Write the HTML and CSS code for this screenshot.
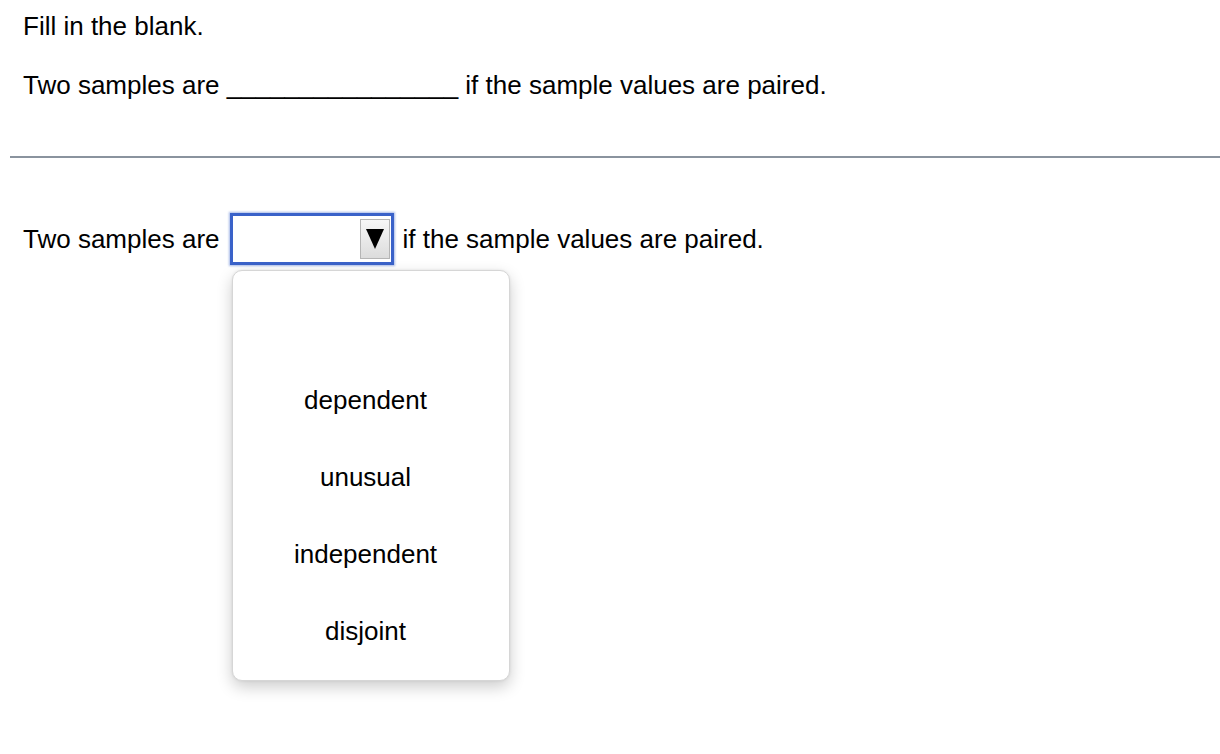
FILE: index.html
```html
<!DOCTYPE html>
<html>
<head>
<meta charset="utf-8">
<link rel="stylesheet" href="styles.css">
</head>
<body>
<div class="page">
  <div class="question">
    <p class="line first">Fill in the blank.</p>
    <p class="line second">Two samples are <span class="blank">________________</span> if the sample values are paired.</p>
  </div>
  <hr class="divider">
  <div class="answer-row">
    <span class="label">Two samples are</span>
    <div class="picker">
      <div class="picker-box">
        <span class="arrow-btn"><svg width="18" height="22" viewBox="0 0 18 22"><polygon points="0,1 18,1 9,21" fill="#000"/></svg></span>
      </div>
      <div class="choices">
        <div class="choice">&nbsp;</div>
        <div class="choice">dependent</div>
        <div class="choice">unusual</div>
        <div class="choice">independent</div>
        <div class="choice">disjoint</div>
      </div>
    </div>
    <span class="label tail">if the sample values are paired.</span>
  </div>
</div>
</body>
</html>
```
FILE: styles.css
```css
html, body {
  margin: 0;
  padding: 0;
  background: #fff;
}
body {
  min-height: 754px;
  font-family: "Liberation Sans", Arial, sans-serif;
  font-size: 26px;
  color: #000;
}
.page {
  padding-left: 10px;
  padding-bottom: 40px;
}
.question {
  padding-left: 13px;
}
.line {
  margin: 0;
  line-height: 30px;
}
.first {
  padding-top: 11px;
}
.second {
  margin-top: 29px;
}
.divider {
  margin: 56px 0 0 0;
  border: 0;
  height: 2px;
  background: #8a939e;
}
.answer-row {
  display: flex;
  align-items: flex-start;
  margin-top: 55px;
  padding-left: 13px;
}
.label {
  line-height: 52px;
  white-space: nowrap;
}
.picker {
  width: 164px;
  min-width: 0;
  flex: none;
  margin-left: 10px;
  margin-right: 9px;
}
.picker-box {
  box-sizing: border-box;
  width: 164px;
  height: 52px;
  border: 3px solid #3a62c9;
  box-shadow: 0 0 2px 1px rgba(58, 98, 201, 0.45);
  background: #fff;
  display: flex;
  align-items: center;
  justify-content: flex-end;
  padding-right: 1px;
}
.arrow-btn {
  box-sizing: border-box;
  width: 30px;
  height: 40px;
  border: 1px solid #b5b5b5;
  background: linear-gradient(#f7f7f7, #dcdcdc);
  display: flex;
  align-items: center;
  justify-content: center;
}
.arrow-btn svg {
  display: block;
}
.choices {
  box-sizing: border-box;
  width: 278px;
  height: 411px;
  margin-top: 5px;
  margin-left: 2px;
  padding: 14px 10px 10px 0;
  background: #fff;
  border: 1px solid #d6d6d6;
  border-radius: 10px;
  box-shadow: 0 6px 16px rgba(0, 0, 0, 0.2), 0 0 3px rgba(0, 0, 0, 0.08);
}
.choice {
  height: 77px;
  line-height: 77px;
  text-align: center;
  white-space: nowrap;
}
```
